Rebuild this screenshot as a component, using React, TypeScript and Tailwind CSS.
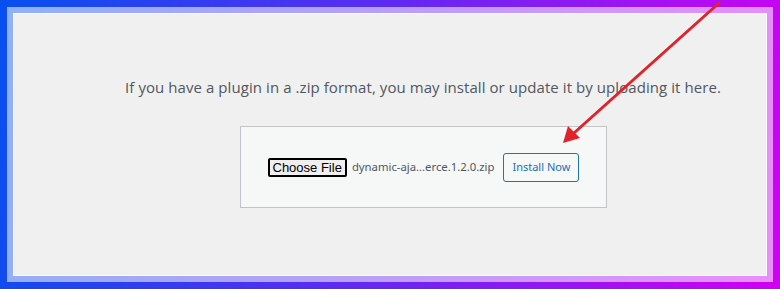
export default function App() {
  return (
    <div className="relative w-[780px] h-[289px] overflow-hidden bg-[linear-gradient(100deg,#0650ee_0%,#5a2cf0_45%,#d200f2_100%)] p-[7px]">
      <div className="h-full w-full bg-white/55 p-[6px]">
        <div className="h-full w-full bg-[#f0f0f1] border border-white/70 flex flex-col items-center pl-[66px] font-['Open_Sans',sans-serif]">
          <p className="mt-[63px] text-[15px] leading-[20px] tracking-[0.07px] text-[#50575e]">
            If you have a plugin in a .zip format, you may install or update it by uploading it here.
          </p>
          <div className="mt-[29px] w-[367px] h-[82px] bg-[#f6f7f7] border border-[#c3c4c7] flex items-center pl-[27px] gap-[5px]">
            <button className="h-[19px] px-[3px] border-2 border-black rounded-[2px] bg-[#efefef] text-[13px] leading-none text-black font-['Liberation_Sans',sans-serif]">
              Choose File
            </button>
            <span className="text-[11.3px] text-[#50575e] font-['Noto_Sans',sans-serif]">dynamic-aja...erce.1.2.0.zip</span>
            <button className="ml-[4px] h-[29px] w-[76px] border border-[#2271b1] rounded-[3px] bg-[#f6f7f7] text-[11px] text-[#2271b1] font-['Noto_Sans',sans-serif]">
              Install Now
            </button>
          </div>
        </div>
      </div>
      <svg className="absolute left-0 top-0" width="780" height="289" viewBox="0 0 780 289">
        <line x1="719" y1="3" x2="574" y2="133" stroke="#e2222a" strokeWidth="3" strokeLinecap="round" />
        <polygon points="563,143 568,126 580,138" fill="#e2222a" />
      </svg>
    </div>
  );
}
